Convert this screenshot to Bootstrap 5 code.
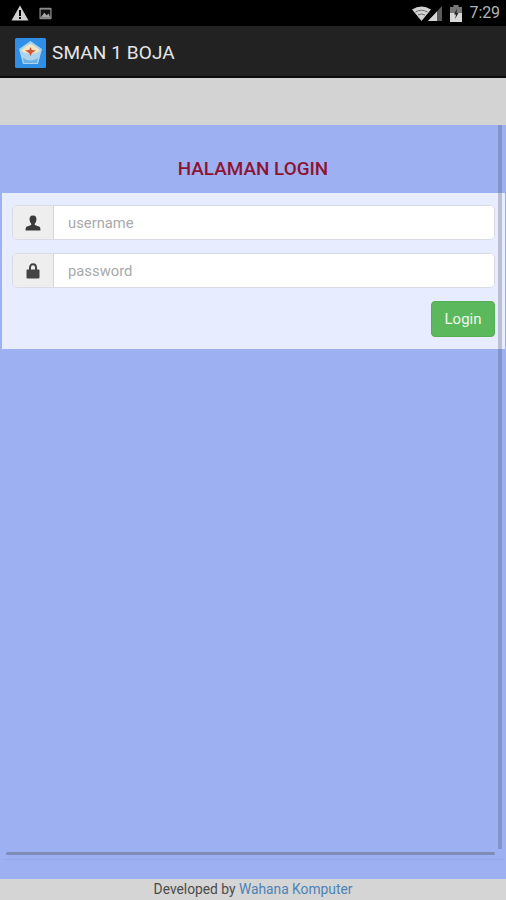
<!DOCTYPE html>
<html lang="id">
<head>
<meta charset="utf-8">
<title>SMAN 1 BOJA</title>
<link href="https://cdn.jsdelivr.net/npm/bootstrap@5.3.0/dist/css/bootstrap.min.css" rel="stylesheet">
<style>
html,body{height:900px;overflow:hidden;}
body{font-family:Roboto,"Liberation Sans",sans-serif;background:#9db0f2;position:relative;width:506px;}
.statusbar{height:26px;background:#000;color:#c4c4c4;padding:0 6px 0 11px;}
.statusbar .clock{font-size:16px;line-height:26px;width:32px;margin-left:6px;color:#b4b4b4;letter-spacing:-.1px;}
.wifi-glyph{margin-right:-4px;}
.battery-glyph{margin-left:8px;}
.photo-glyph{margin-left:10px;}
.appbar{height:52px;background:#222;border-bottom:2px solid #0c0c0c;padding:4px 15px 0 15px;gap:6px;}
.appbar .apptitle{color:#e6e6e6;font-size:19px;letter-spacing:.1px;line-height:26px;}
.greyband{height:47px;background:#d3d3d3;}
.loginarea{height:754px;background:#9db0f2;padding-top:32px;}
.logintitle{color:#8f1330;font-size:18.9px;font-weight:500;line-height:24px;margin:0 0 12px;text-align:center;}
.loginpanel{background:#e8ecff;margin:0 1px 0 2px;height:156px;padding:12px 10px 0 10px;}
.fieldrow{height:35px;margin-bottom:13px;border:1px solid #d9dbe2;border-radius:5px;overflow:hidden;background:#fff;}
.fieldicon{width:41px;background:#eeeeee;border-right:1px solid #d8d8d8;}
.fieldtext{border:0;padding:1px 14px 0;font-size:14.8px;color:#333;background:#fff;flex:1;min-width:0;font-family:Roboto,"Liberation Sans",sans-serif;outline:0;}
.fieldtext::placeholder{color:#a9a9a9;opacity:1;}
.loginbtn{background:#5cb85c;border:1px solid #55ae55;color:#eef7ee;font-size:15px;width:64px;height:36px;padding:1px 0 0;border-radius:4px;line-height:1;}
.faintrule{height:1px;background:#95a8ea;margin:auto 1px 19px 3px;opacity:1;border:0;}
.scroll-v{position:absolute;left:498px;top:125px;width:4px;height:724px;background:rgba(60,70,100,.27);}
.scroll-h{position:absolute;left:6px;top:852px;width:489px;height:3px;background:#7e8db7;border-radius:2px;}
.pagefoot{height:21px;background:#d5d5d5;color:#4b4b4b;font-size:13.8px;line-height:20px;text-align:center;}
.pagefoot a{color:#4d82b5;text-decoration:none;}
</style>
</head>
<body>
<div class="statusbar d-flex align-items-center justify-content-between">
  <div class="d-flex align-items-center">
    <svg width="18" height="16" viewBox="0 0 18 16"><path d="M9 0.5 L17.5 15.5 H0.5 Z" fill="#d0d0d0"/><rect x="8" y="5" width="2" height="6" fill="#000"/><rect x="8" y="12" width="2" height="2" fill="#000"/></svg>
    <svg class="photo-glyph" width="13" height="13" viewBox="0 0 15 14"><rect x="0.5" y="0.5" width="14" height="13" rx="1" fill="#8c8c8c"/><rect x="2" y="2.5" width="11" height="9" fill="#111"/><path d="M2 11.5 L6 6 L9 9 L11 7 L13 11.5 Z" fill="#a8a8a8"/></svg>
  </div>
  <div class="d-flex align-items-center">
    <svg class="wifi-glyph" width="21" height="15" viewBox="0 0 19 15"><path d="M0 3.5 Q9.5 -2.500 19 3.500 L9.500 15 Z" fill="#d2d2d2"/><path d="M3.500 6 Q9.500 2.500 15.500 6" stroke="#6a6a6a" fill="none"/><path d="M6 9 Q9.500 7 13 9" stroke="#6a6a6a" fill="none"/></svg>
    <svg width="14" height="15" viewBox="0 0 14 15"><path d="M14 0 V15 H0 Z" fill="#5a5a5a"/><path d="M9 5.500 V15 H0 Z" fill="#d6d6d6"/></svg>
    <svg class="battery-glyph" width="12" height="17" viewBox="0 0 12 17"><rect x="3.500" y="0" width="5" height="2" fill="#7a7a7a"/><rect x="0" y="2" width="12" height="15" fill="#d8d8d8"/><rect x="0" y="2" width="12" height="6" fill="#777"/><path d="M7 3.500 L4 9.500 H6 L5 14 L8.500 8 H6.500 Z" fill="#222"/></svg>
    <span class="clock text-end">7:29</span>
  </div>
</div>
<div class="appbar d-flex align-items-center">
  <svg width="31" height="30" viewBox="0 0 31 30"><rect width="31" height="30" rx="1.500" fill="#2f8fe6"/><path d="M15.500 3 L27 11 L23 26 H8 L4 11 Z" fill="#a9d3ee"/><path d="M6 13 Q10 8 15.500 6 Q21 8 25 13 Q15.500 19 6 13 Z" fill="#f2e6c0"/><path d="M15.500 9 L16.800 12 L21 12.500 L17 15 L15.500 18 L14 15 L10 12.500 L14.200 12 Z" fill="#d2553c"/><path d="M8 20 Q15.500 25 23 20 L22 25 H9 Z" fill="#6cb1e4"/></svg>
  <span class="apptitle">SMAN 1 BOJA</span>
</div>
<div class="greyband"></div>
<main class="loginarea d-flex flex-column">
  <h1 class="logintitle">HALAMAN LOGIN</h1>
  <form class="loginpanel">
    <div class="fieldrow d-flex">
      <div class="fieldicon d-flex align-items-center justify-content-center">
        <svg width="16" height="16" viewBox="0 0 16 16"><path d="M8 0.500 C5.200 0.500 4.300 2.500 4.600 5 C4.800 6.800 5.500 8 6.200 8.800 V10 L1.500 11.800 C0.800 12.200 0.500 14 0.500 15.500 H15.500 C15.500 14 15.200 12.200 14.500 11.800 L9.800 10 V8.800 C10.500 8 11.200 6.800 11.400 5 C11.700 2.500 10.800 0.500 8 0.500 Z" fill="#3a3a3a"/></svg>
      </div>
      <input class="fieldtext" type="text" placeholder="username">
    </div>
    <div class="fieldrow d-flex">
      <div class="fieldicon d-flex align-items-center justify-content-center">
        <svg width="14" height="16" viewBox="0 0 14 16"><path d="M4 7 V4.500 C4 2.600 5.300 1.200 7 1.200 C8.700 1.200 10 2.600 10 4.500 V7" fill="none" stroke="#444" stroke-width="2"/><rect x="0.500" y="6.500" width="13" height="9" rx="1" fill="#444"/></svg>
      </div>
      <input class="fieldtext" type="password" placeholder="password">
    </div>
    <div class="d-flex justify-content-end">
      <button type="button" class="btn loginbtn">Login</button>
    </div>
  </form>
  <div class="faintrule"></div>
</main>
<footer class="pagefoot">Developed by <a href="#">Wahana Komputer</a></footer>
<div class="scroll-v"></div>
<div class="scroll-h"></div>
<script src="https://cdn.jsdelivr.net/npm/bootstrap@5.3.0/dist/js/bootstrap.bundle.min.js"></script>
</body>
</html>
